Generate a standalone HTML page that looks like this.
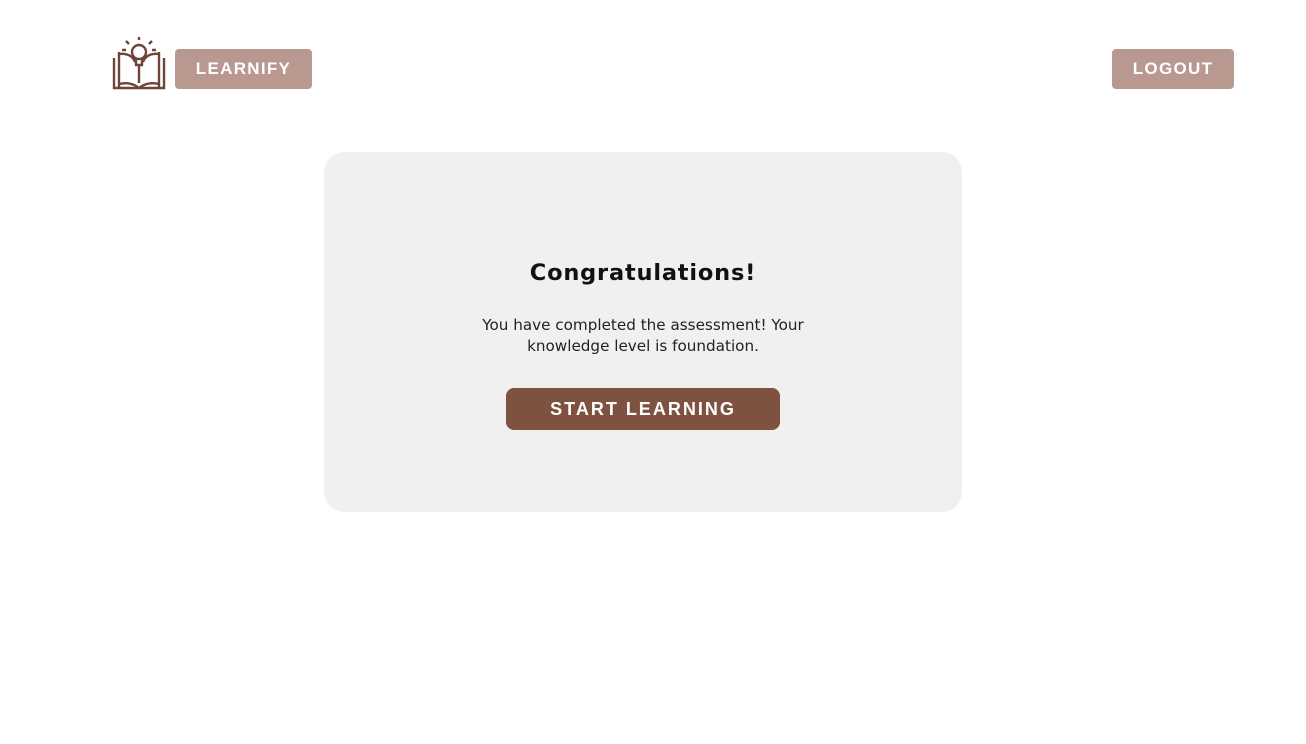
<!DOCTYPE html>
<html><head><style>
body{margin:0;width:1306px;height:744px;background:#fff;font-family:"Liberation Sans",sans-serif;position:relative;overflow:hidden}
.btn{position:absolute;background:#b99890;color:#fff;font-weight:bold;letter-spacing:1.3px;font-size:17px;display:flex;align-items:center;justify-content:center;border-radius:4px}
.card{position:absolute;left:324px;top:152px;width:638px;height:360px;background:#f0f0f0;border-radius:20px;text-align:center}
h1{position:absolute;top:260px;left:324px;width:638px;margin:0;text-align:center;font-size:22.5px;letter-spacing:0.8px;font-family:"DejaVu Sans",sans-serif;font-weight:bold;color:#111}
p{position:absolute;top:315px;left:324px;width:638px;margin:0;text-align:center;font-size:15.2px;line-height:21px;color:#222;font-family:"DejaVu Sans",sans-serif;font-weight:normal}
.start{position:absolute;left:506px;top:388px;width:274px;height:42px;background:#7e5140;color:#fff;border-radius:8px;font-weight:bold;font-size:18px;letter-spacing:2px;display:flex;align-items:center;justify-content:center}
</style></head><body>
<svg style="position:absolute;left:110px;top:36px" width="58" height="56" viewBox="0 0 58 56" fill="none" stroke="#6e4538" stroke-width="2.4">
<circle cx="29" cy="16" r="7"/>
<path d="M26 23v6h6v-6"/>
<path d="M29 29v18"/>
<path d="M16 5l3 3M42 5l-3 3M29 1v3M12 14h4M42 14h4"/>
<path d="M9 16v36M49 16v36"/>
<path d="M4 22v30h50V22"/>
<path d="M9 48c8-2 15 0 20 4c5-4 12-6 20-4"/>
<path d="M9 18c8-1 14 2 16 8M49 18c-8-1-14 2-16 8"/>
</svg>
<div class="btn" style="left:175px;top:49px;width:137px;height:40px">LEARNIFY</div>
<div class="btn" style="left:1112px;top:49px;width:122px;height:40px">LOGOUT</div>
<div class="card"></div>
<h1>Congratulations!</h1>
<p>You have completed the assessment! Your<br>knowledge level is foundation.</p>
<div class="start">START LEARNING</div>
</body></html>
